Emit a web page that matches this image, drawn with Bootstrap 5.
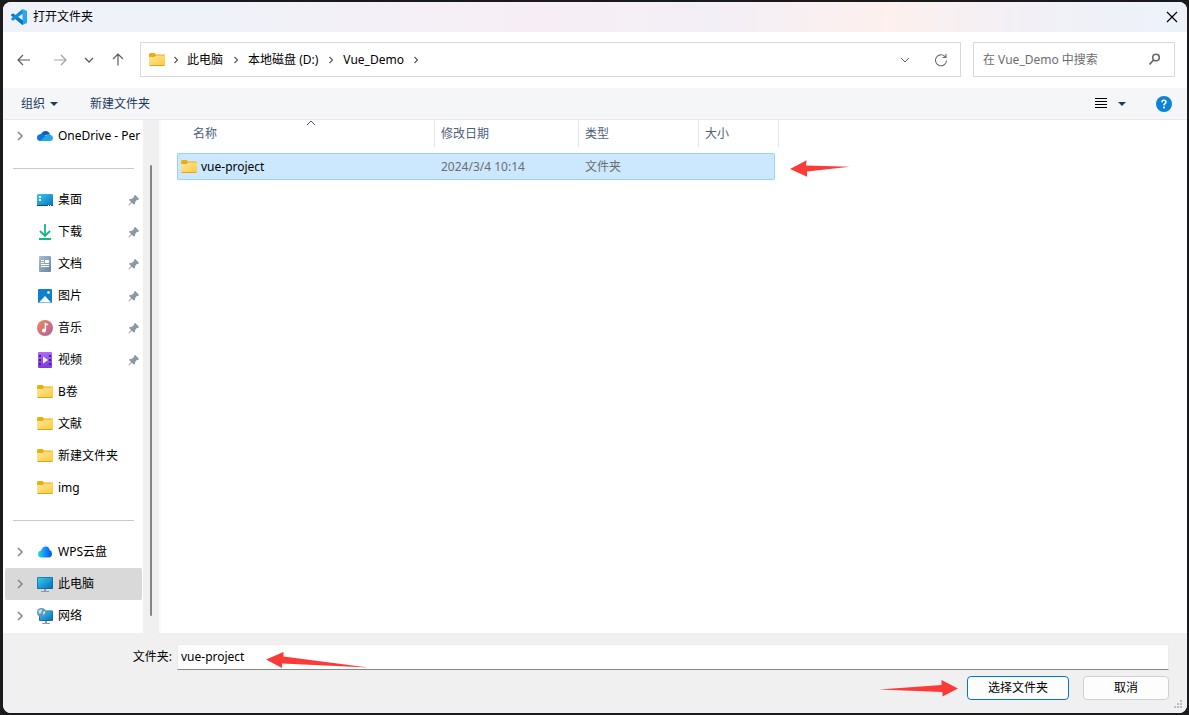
<!DOCTYPE html>
<html lang="zh-CN">
<head>
<meta charset="utf-8">
<meta name="viewport" content="width=device-width, initial-scale=1">
<title>打开文件夹</title>
<link href="https://cdn.jsdelivr.net/npm/bootstrap@5.3.0/dist/css/bootstrap.min.css" rel="stylesheet">
<style>
body{font:12px/16px "Noto Sans","Noto Sans CJK SC",sans-serif;color:#000;background:#1b1b1d;min-height:100vh;padding:2px 2px 2px 3px}
svg{display:block;flex:none}
a{color:inherit;text-decoration:none}
.dialog{min-height:calc(100vh - 4px);background:#fff;border-radius:8px;overflow:hidden}
.titlebar{height:30px;padding:0 9px 0 8px;gap:6px;background:linear-gradient(90deg,#f0f2f9 0%,#f0f2f9 18%,#f7eef5 45%,#f3eff6 60%,#fdf0ee 75%,#f2f0f6 86%,#edf2fa 100%)}
.bare{border:0;background:none;padding:0;color:inherit;display:flex;align-items:center;justify-content:center}
.navrow{padding:10px 12px 11px 3px}
.navrow .bare{width:36px;height:35px}
.navrow .bare.slim{width:22px}
.box{height:35px;border:1px solid #d9d9d9;background:#fff}
.address{margin:0 12px 0 4px;padding:0 1px 0 8px}
.sep{width:25px;display:flex;justify-content:center}
.sep.first{width:22px}
.search{width:202px;padding:0 13px 0 9px}
.search input{font:inherit;min-width:0;border:0;outline:0;padding:0;color:#000}
.search input::placeholder{color:#6d6d6d;opacity:1}
.toolbar{height:32px;background:#f5f6f8;border-bottom:1px solid #e8e8e8;color:#1e395b;padding:0 15px 0 18px}
.organize{gap:5px}
.viewtools{gap:11px;margin-right:30px}
.side{width:140px;background:#fff}
.side a{height:32px;padding-left:13px;white-space:nowrap}
.side .lead-icon{width:16px;margin:0 5px 0 13px;display:flex;justify-content:center}
.side .twist{width:8px;display:flex;justify-content:center}
.side .pin{margin-left:auto;margin-right:3px}
.side .current{background:#d9d9d9;border-radius:2px;margin:0 1px 0 2px;padding-left:11px}
.side hr{margin:16px 9px 15px 10px;border-top:1px solid #c9c9c9;opacity:1}
.gutter{width:16px;background:#f0f0f0;padding:45px 7px 17px}
.thumb{width:2px;background:#858585;border-radius:1px}
.files{border-left:2px solid #fbfbfb;padding-left:16px}
.files table{table-layout:fixed;width:602px;border-collapse:separate;border-spacing:0}
.files th{height:27px;font-weight:400;color:#4c607a;border-right:1px solid #e5e5e5;padding:0 0 0 6px}
.files th:first-child{padding-left:16px}
.files td{padding:6px 0 0;color:#6d6d6d}
.cellfill{height:27px;background:#cce8ff;border:solid #99d1ff;border-width:1px 0;padding-left:6px;display:flex;align-items:center}
td:first-child .cellfill{border-left-width:1px;border-radius:2px 0 0 2px;padding-left:3px;gap:4px;color:#000}
td:last-child .cellfill{border-right-width:1px;border-radius:0 2px 2px 0;margin-right:4px}
.row-arrow{left:100%;bottom:3px;margin-left:10px}
.foot{background:#f0f0f0;padding:11px 18px 13px}
.foot label{width:156px;padding-right:5px;text-align:right}
.foot input{font:inherit;height:26px;border:1px solid #ececec;border-bottom-color:#868686;padding:0 3px 2px;outline:0;min-width:0}
.name-arrow{left:245px;top:8px}
.actions{margin-top:6px}
.act{font:inherit;height:24px;background:#fdfdfd;border:1px solid #d0d0d0;border-radius:4px;padding:0;color:#000;width:86px;margin-left:14px}
.act.primary{width:102px;border-color:#0078d4;margin-left:8px}
.over{position:absolute}
</style>
</head>
<body>
<svg width="0" height="0" class="position-absolute">
<defs>
<linearGradient id="gf" x1="0" y1="0" x2="1" y2="1"><stop offset="0" stop-color="#ffe8a0"/><stop offset="1" stop-color="#fdc936"/></linearGradient>
<linearGradient id="gb" x1="0" y1="0" x2="1" y2="1"><stop offset="0" stop-color="#35d0e6"/><stop offset="1" stop-color="#0a6cc0"/></linearGradient>
<linearGradient id="gm" x1="0" y1="0" x2="1" y2="1"><stop offset="0" stop-color="#f38a52"/><stop offset="1" stop-color="#ad5fa5"/></linearGradient>
<linearGradient id="gv" x1="0" y1="0" x2="0" y2="1"><stop offset="0" stop-color="#b06af4"/><stop offset="1" stop-color="#7d3ad8"/></linearGradient>
<linearGradient id="gt" x1="0" y1="0" x2="1" y2="1"><stop offset="0" stop-color="#a9bfd3"/><stop offset="1" stop-color="#6485a5"/></linearGradient>
<linearGradient id="gw" x1="0" y1="0" x2="1" y2="0"><stop offset="0" stop-color="#27e3c4"/><stop offset=".5" stop-color="#138dfb"/><stop offset="1" stop-color="#0751e8"/></linearGradient>
<symbol id="folder" viewBox="0 0 16 16"><path d="M0 2.500q0-1.500 1.500-1.500h4l1.500 1.500h7.500q1.500 0 1.500 1v6H0z" fill="#f0ac0c"/><path d="M0 5h5.500L7 3.500h9v9q0 1-1 1H1q-1 0-1-1z" fill="url(#gf)"/><path d="M.5 13.500h15" stroke="#e2a321"/></symbol>
<symbol id="chev" viewBox="0 0 8 10"><path d="M2 1l4 4-4 4" fill="none" stroke="currentColor" stroke-width="1.500"/></symbol>
<symbol id="caret" viewBox="0 0 8 4"><path d="M0 0h8L4 4z" fill="#1e395b"/></symbol>
<symbol id="pin" viewBox="0 0 12 12"><path d="M7 .8L11.200 5 9.900 5.900 8.800 6 7.200 8 7 10 6 10.800 3.800 8.700.9 11.500.3 11 3.200 8 1 6 1.900 5 4 4.800 6 3.100 6.100 1.900z" fill="#8c98a5"/></symbol>
</defs></svg>

<div class="dialog d-flex flex-column" role="dialog">
  <header class="titlebar d-flex align-items-center">
    <svg width="16" height="16" viewBox="0 0 16 16"><path d="M11.500 0L16 2v12l-4.500 2z" fill="#29a5f2"/><path d="M1.200 4.700L0 5.800v.8l11 9.200 1-.1v-4.300L2.300 4.500z" fill="#0878c4"/><path d="M11.500 0L.2 9.500v1l1.400 1.100.7-.1L12 4.500z" fill="#128ed8"/></svg>
    <span class="flex-grow-1 text-nowrap">打开文件夹</span>
    <button class="bare" aria-label="关闭"><svg width="12" height="12" viewBox="0 0 12 12"><path d="M1 1l10 10M11 1L1 11" stroke="#000" stroke-width="1.200"/></svg></button>
  </header>

  <div class="navrow d-flex">
    <button class="bare" aria-label="后退"><svg width="14" height="12" viewBox="0 0 14 12" fill="none" stroke="#5c5c5c" stroke-width="1.200"><path d="M13 6H1M6 1L1 6l5 5"/></svg></button>
    <button class="bare" aria-label="前进"><svg width="14" height="12" viewBox="0 0 14 12" fill="none" stroke="#a2a2a2" stroke-width="1.200"><path d="M1 6h12M8 1l5 5-5 5"/></svg></button>
    <button class="bare slim" aria-label="最近位置"><svg width="10" height="6" viewBox="0 0 10 6" fill="none" stroke="#5c5c5c" stroke-width="1.300"><path d="M1 1l4 4 4-4"/></svg></button>
    <button class="bare" aria-label="向上"><svg width="12" height="13" viewBox="0 0 12 13" fill="none" stroke="#5c5c5c" stroke-width="1.200"><path d="M6 12.500V1M1 6l5-5 5 5"/></svg></button>
    <div class="box address d-flex align-items-center flex-grow-1 text-nowrap">
      <svg width="16" height="16"><use href="#folder"/></svg>
      <span class="sep first"><svg width="6" height="8" color="#555"><use href="#chev"/></svg></span><a href="#">此电脑</a>
      <span class="sep"><svg width="6" height="8" color="#555"><use href="#chev"/></svg></span><a href="#">本地磁盘 (D:)</a>
      <span class="sep"><svg width="6" height="8" color="#555"><use href="#chev"/></svg></span><a href="#">Vue_Demo</a>
      <span class="sep"><svg width="6" height="8" color="#555"><use href="#chev"/></svg></span>
      <button class="bare ms-auto" aria-label="历史记录"><svg width="10" height="6" viewBox="0 0 10 6" fill="none" stroke="#666"><path d="M1 1l4 4 4-4"/></svg></button>
      <button class="bare" aria-label="刷新"><svg width="14" height="14" viewBox="0 0 14 14" fill="none" stroke="#6b6b6b" stroke-width="1.100"><path d="M12.500 7.500A5.500 5.500 0 1 1 10.800 3.300L12 4.500M12 1v3.500H8.500"/></svg></button>
    </div>
    <div class="box search d-flex align-items-center">
      <input class="flex-grow-1" type="search" placeholder="在 Vue_Demo 中搜索" aria-label="在 Vue_Demo 中搜索">
      <svg width="13" height="13" viewBox="0 0 13 13" fill="none" stroke="#666"><circle cx="8" cy="4.500" r="3.300" stroke-width="1.600"/><path d="M5.500 7L1.500 11.500" stroke-width="1.800"/></svg>
    </div>
  </div>

  <div class="toolbar d-flex align-items-center text-nowrap">
    <button class="bare organize">组织<svg width="8" height="4"><use href="#caret"/></svg></button>
    <button class="bare ms-4 ps-2">新建文件夹</button>
    <div class="viewtools d-flex ms-auto">
      <button class="bare" aria-label="更改视图"><svg width="12" height="11" viewBox="0 0 12 11" shape-rendering="crispEdges"><path d="M0 .5h12M0 3.500h12M0 6.500h12M0 9.500h12" stroke="#000"/></svg></button>
      <button class="bare" aria-label="更多选项"><svg width="8" height="4"><use href="#caret"/></svg></button>
    </div>
    <button class="bare" aria-label="帮助"><svg width="16" height="16" viewBox="0 0 16 16"><circle cx="8" cy="8" r="8" fill="#0c83d8"/><path d="M6 6.200Q6 4.200 8 4.200t2 1.800Q10 7 8.800 7.700 8 8.200 8 9.400" fill="none" stroke="#fff" stroke-width="1.600"/><circle cx="8" cy="11.500" r="1" fill="#fff"/></svg></button>
  </div>

  <div class="d-flex flex-grow-1">
    <nav class="side flex-shrink-0" aria-label="导航窗格">
      <a class="d-flex align-items-center" href="#"><span class="twist"><svg width="8" height="10" color="#858585"><use href="#chev"/></svg></span><span class="lead-icon"><svg width="16" height="16" viewBox="0 0 16 16"><path d="M3.500 7.500Q5 3 8.500 3q3.500 0 4.600 3.500z" fill="#0a5eb8"/><path d="M3.500 13Q0 13 0 9.800 0 6.500 3.500 6q2.500-.3 5 1.500L12 9 8 13z" fill="#0a78d6"/><path d="M3 13l6-5.500Q13.500 5 15.500 8.500 17 13 12.800 13z" fill="#28a4ea"/></svg></span>OneDrive - Per</a>
      <hr>
      <a class="d-flex align-items-center" href="#"><span class="twist"></span><span class="lead-icon"><svg width="16" height="16" viewBox="0 0 16 16"><rect y="2" width="16" height="12" rx="1" fill="url(#gb)"/><path d="M0 13.500h16" stroke="#0b4e86"/><path d="M2 4h2v2H2zM2 7h2v2H2zM11 13h1v1h-1zM13 13h1v1h-1z" fill="#fff"/></svg></span>桌面<svg class="pin" width="12" height="12"><use href="#pin"/></svg></a>
      <a class="d-flex align-items-center" href="#"><span class="twist"></span><span class="lead-icon"><svg width="16" height="16" viewBox="0 0 16 16" fill="none" stroke="#18b48c" stroke-width="1.800"><path d="M8 0v12M3 7l5 5 5-5M2 15h12"/></svg></span>下载<svg class="pin" width="12" height="12"><use href="#pin"/></svg></a>
      <a class="d-flex align-items-center" href="#"><span class="twist"></span><span class="lead-icon"><svg width="16" height="16" viewBox="0 0 16 16"><rect x="2" width="12" height="16" rx="1" fill="url(#gt)"/><path d="M4 4.500h3M4 6.500h3M4 8.500h8M4 10.500h8" stroke="#fff"/><path d="M8 4h4v3H8z" fill="#fff"/></svg></span>文档<svg class="pin" width="12" height="12"><use href="#pin"/></svg></a>
      <a class="d-flex align-items-center" href="#"><span class="twist"></span><span class="lead-icon"><svg width="16" height="16" viewBox="0 0 16 16"><rect x="1" y="1" width="14" height="14" rx="1" fill="#0f7fcf"/><path d="M2 14.500L8 8l6 6.500z" fill="#fff"/><circle cx="11.500" cy="4.500" r="1.300" fill="#fff"/></svg></span>图片<svg class="pin" width="12" height="12"><use href="#pin"/></svg></a>
      <a class="d-flex align-items-center" href="#"><span class="twist"></span><span class="lead-icon"><svg width="16" height="16" viewBox="0 0 16 16"><circle cx="8" cy="8" r="8" fill="url(#gm)"/><circle cx="7" cy="10.500" r="2" fill="#fff"/><path d="M8.400 10.500V3.500L11 4.800" fill="none" stroke="#fff" stroke-width="1.400"/></svg></span>音乐<svg class="pin" width="12" height="12"><use href="#pin"/></svg></a>
      <a class="d-flex align-items-center" href="#"><span class="twist"></span><span class="lead-icon"><svg width="16" height="16" viewBox="0 0 16 16"><rect x="1" width="14" height="16" rx="1" fill="url(#gv)"/><path d="M2 3h2v2H2zM2 7h2v2H2zM2 11h2v2H2zM12 3h2v2h-2zM12 7h2v2h-2zM12 11h2v2h-2z" fill="#4b1c96"/><path d="M6 4.500l5 3.500-5 3.500z" fill="#fff"/></svg></span>视频<svg class="pin" width="12" height="12"><use href="#pin"/></svg></a>
      <a class="d-flex align-items-center" href="#"><span class="twist"></span><span class="lead-icon"><svg width="16" height="16"><use href="#folder"/></svg></span>B卷</a>
      <a class="d-flex align-items-center" href="#"><span class="twist"></span><span class="lead-icon"><svg width="16" height="16"><use href="#folder"/></svg></span>文献</a>
      <a class="d-flex align-items-center" href="#"><span class="twist"></span><span class="lead-icon"><svg width="16" height="16"><use href="#folder"/></svg></span>新建文件夹</a>
      <a class="d-flex align-items-center" href="#"><span class="twist"></span><span class="lead-icon"><svg width="16" height="16"><use href="#folder"/></svg></span>img</a>
      <hr>
      <a class="d-flex align-items-center" href="#"><span class="twist"><svg width="8" height="10" color="#858585"><use href="#chev"/></svg></span><span class="lead-icon"><svg width="16" height="16" viewBox="0 0 16 16"><path d="M4.500 13.500Q1 13.500 1 10q0-3 3-3.600Q5.500 2.500 9 2.600q3 .2 3.600 3.400 2.400.8 2.400 3.800 0 3.700-3.500 3.700z" fill="url(#gw)"/></svg></span>WPS云盘</a>
      <a class="d-flex align-items-center current" href="#" aria-current="page"><span class="twist"><svg width="8" height="10" color="#858585"><use href="#chev"/></svg></span><span class="lead-icon"><svg width="16" height="16" viewBox="0 0 16 16"><rect y="1" width="16" height="12" rx="1" fill="#17629c"/><rect x=".7" y="1.700" width="14.600" height="10.600" fill="url(#gb)"/><path d="M7 13h2v2H7zM4 15h8v1H4z" fill="#9099a2"/></svg></span>此电脑</a>
      <a class="d-flex align-items-center" href="#"><span class="twist"><svg width="8" height="10" color="#858585"><use href="#chev"/></svg></span><span class="lead-icon"><svg width="16" height="16" viewBox="0 0 16 16"><rect x="2" y="2.500" width="14" height="10.500" rx="1" fill="#17629c"/><rect x="2.700" y="3.200" width="12.600" height="9.100" fill="url(#gb)"/><path d="M8 13h2v2H8zM5 15h8v1H5z" fill="#9099a2"/><circle cx="4.500" cy="4.500" r="4.500" fill="#5a96bd"/><path d="M1 3.500Q3 .5 5.500 1.500 4 3.500 4.500 5L2.500 6zM6 4l2.200-1.500V5L6 7z" fill="#c4dfed"/></svg></span>网络</a>
    </nav>
    <div class="gutter d-flex"><div class="thumb"></div></div>
    <main class="files flex-grow-1">
      <div class="d-inline-flex position-relative">
        <table>
          <colgroup><col style="width:258px"><col style="width:144px"><col style="width:120px"><col style="width:80px"></colgroup>
          <thead><tr><th class="position-relative" scope="col" aria-sort="ascending">名称<svg class="over top-0 start-50" width="10" height="6" viewBox="0 0 10 6" fill="none" stroke="#555"><path d="M1 5l4-4 4 4"/></svg></th><th scope="col">修改日期</th><th scope="col">类型</th><th scope="col">大小</th></tr></thead>
          <tbody><tr><td><div class="cellfill"><svg width="16" height="16"><use href="#folder"/></svg>vue-project</div></td><td><div class="cellfill">2024/3/4 10:14</div></td><td><div class="cellfill">文件夹</div></td><td><div class="cellfill"></div></td></tr></tbody>
        </table>
        <svg class="over row-arrow" width="62" height="17" viewBox="-1 0 60 16"><path d="M0 8.500L16 0l-.5 5L58 6.300 16.500 11v5z" fill="#fc3a38"/></svg>
      </div>
    </main>
  </div>

  <footer class="foot position-relative">
    <div class="d-flex align-items-center position-relative">
      <label for="folder-name">文件夹:</label>
      <input id="folder-name" class="flex-grow-1" type="text" value="vue-project">
      <svg class="over name-arrow" width="103" height="17" viewBox="0 0 103 17"><path d="M0 7.500L17.500 0v4.500L102 15.500 16 11.500v4.500z" fill="#fc3a38"/></svg>
    </div>
    <div class="actions d-flex align-items-center justify-content-end">
      <svg width="80" height="17" viewBox="0 0 80 17"><path d="M0 9.500L62.500 5V0L79 8.500 63.500 16.500V12z" fill="#fc3a38"/></svg>
      <button class="act primary">选择文件夹</button>
      <button class="act">取消</button>
    </div>
    <svg class="over bottom-0 end-0 me-1 mb-1" width="9" height="9" viewBox="0 0 9 9" fill="#bdbdbd"><path d="M6 0h2v2H6zM3 3h2v2H3zM6 3h2v2H6zM0 6h2v2H0zM3 6h2v2H3zM6 6h2v2H6z"/></svg>
  </footer>
</div>
<script src="https://cdn.jsdelivr.net/npm/bootstrap@5.3.0/dist/js/bootstrap.bundle.min.js"></script>
</body>
</html>
